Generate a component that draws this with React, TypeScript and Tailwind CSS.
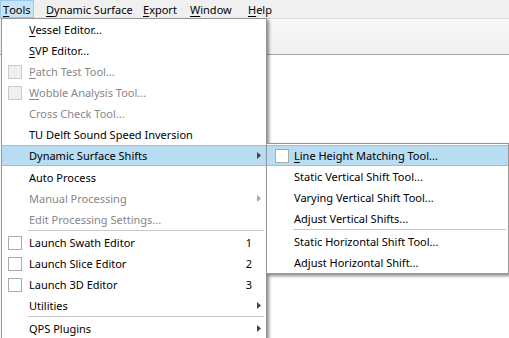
import React from "react";

type Item =
  | {
      kind: "item";
      label: string;
      mnemonic?: number;
      disabled?: boolean;
      check?: "on" | "off";
      shortcut?: string;
      sub?: boolean;
      active?: boolean;
      gapBefore?: boolean;
    }
  | { kind: "sep" };

const MAIN: Item[] = [
  { kind: "item", label: "Vessel Editor...", mnemonic: 0 },
  { kind: "item", label: "SVP Editor...", mnemonic: 0 },
  { kind: "item", label: "Patch Test Tool...", mnemonic: 0, disabled: true, check: "off" },
  { kind: "item", label: "Wobble Analysis Tool...", mnemonic: 0, disabled: true, check: "off" },
  { kind: "item", label: "Cross Check Tool...", disabled: true },
  { kind: "item", label: "TU Delft Sound Speed Inversion" },
  { kind: "item", label: "Dynamic Surface Shifts", sub: true, active: true },
  { kind: "item", label: "Auto Process", gapBefore: true },
  { kind: "item", label: "Manual Processing", disabled: true, sub: true },
  { kind: "item", label: "Edit Processing Settings...", disabled: true },
  { kind: "sep" },
  { kind: "item", label: "Launch Swath Editor", check: "on", shortcut: "1" },
  { kind: "item", label: "Launch Slice Editor", check: "on", shortcut: "2" },
  { kind: "item", label: "Launch 3D Editor", check: "on", shortcut: "3" },
  { kind: "item", label: "Utilities", sub: true },
  { kind: "sep" },
  { kind: "item", label: "QPS Plugins", sub: true },
];

const SUB: Item[] = [
  { kind: "item", label: "Line Height Matching Tool...", mnemonic: 0, check: "on", active: true },
  { kind: "item", label: "Static Vertical Shift Tool..." },
  { kind: "item", label: "Varying Vertical Shift Tool..." },
  { kind: "item", label: "Adjust Vertical Shifts..." },
  { kind: "sep" },
  { kind: "item", label: "Static Horizontal Shift Tool..." },
  { kind: "item", label: "Adjust Horizontal Shift..." },
];

function Label({ text, mnemonic }: { text: string; mnemonic?: number }) {
  if (mnemonic === undefined) return <>{text}</>;
  return (
    <>
      {text.slice(0, mnemonic)}
      <span className="underline decoration-1 underline-offset-2">{text[mnemonic]}</span>
      {text.slice(mnemonic + 1)}
    </>
  );
}

function Arrow({ disabled }: { disabled?: boolean }) {
  return (
    <svg width="4" height="7" viewBox="0 0 4 7" className="block">
      <path d="M0 0L4 3.5L0 7Z" fill={disabled ? "#a8a8a8" : "#454545"} />
    </svg>
  );
}

function Menu({ items, checkLeft }: { items: Item[]; checkLeft: string }) {
  return (
    <>
      {items.map((it, i) => {
        if (it.kind === "sep") {
          return (
            <div key={i} className="h-[2px] pl-[26px] pr-[2px]">
              <div className="h-px bg-[#c8c8c8]" />
            </div>
          );
        }
        return (
          <div
            key={i}
            className={
              "relative flex h-[21px] items-center border-y " +
              (it.active ? "border-[#8fc3e6] bg-[#b8dcf2] " : "border-transparent ") +
              (it.gapBefore ? "mt-px " : "") +
              (it.disabled ? "text-[#878787]" : "text-black")
            }
          >
            {it.check && (
              <div
                className={
                  "absolute top-[3px] h-[14px] w-[14px] border " +
                  checkLeft +
                  (it.disabled ? " border-[#cbcbcb] bg-[#efefef]" : " border-[#ababab] bg-white")
                }
              />
            )}
            <span className="pl-[27px] whitespace-nowrap">
              <Label text={it.label} mnemonic={it.mnemonic} />
            </span>
            {it.shortcut && <span className="ml-auto mr-[14px]">{it.shortcut}</span>}
            {it.sub && (
              <span className="ml-auto mr-[5px]">
                <Arrow disabled={it.disabled} />
              </span>
            )}
          </div>
        );
      })}
    </>
  );
}

export default function App() {
  return (
    <div
      className="relative h-[338px] w-[509px] overflow-hidden bg-white text-[11px] leading-none"
      style={{ fontFamily: '"Noto Sans", "Open Sans", sans-serif' }}
    >
      {/* menu bar */}
      <div className="flex h-[18px] items-center bg-[#f0f0f0]">
        <div className="flex h-[18px] w-[34px] items-center border border-[#99cbef] bg-[#c9e4f6] pl-[2px]">
          <Label text="Tools" mnemonic={0} />
        </div>
        <span className="ml-[12px] w-[97px]"><Label text="Dynamic Surface" mnemonic={0} /></span>
        <span className="w-[47px]"><Label text="Export" mnemonic={0} /></span>
        <span className="w-[58px]"><Label text="Window" mnemonic={0} /></span>
        <span><Label text="Help" mnemonic={0} /></span>
      </div>

      {/* toolbar strip */}
      <div className="h-[37px] border-y border-t-[#dcdcdc] border-b-[#a5a5a5] bg-gradient-to-b from-[#f8f8f8] to-[#f0f0f0]" />

      {/* main menu */}
      <div className="absolute left-[1px] top-[18px] w-[266px] border border-[#979797] bg-white shadow-[2px_2px_3px_rgba(0,0,0,0.45)]">
        <Menu items={MAIN} checkLeft="left-[6px]" />
      </div>

      {/* sub menu */}
      <div className="absolute left-[266px] top-[143px] w-[243px] border border-[#979797] bg-white pt-px shadow-[2px_2px_3px_rgba(0,0,0,0.45)]">
        <Menu items={SUB} checkLeft="left-[8px]" />
      </div>
    </div>
  );
}
